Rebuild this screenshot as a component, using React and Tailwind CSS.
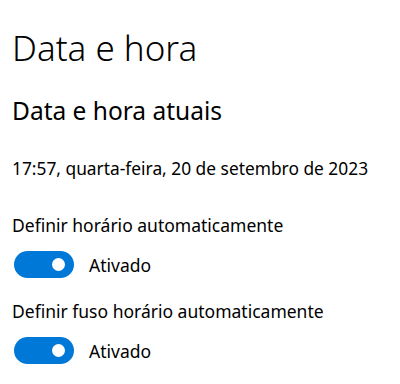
export default function App() {
  const font = { fontFamily: '"Noto Sans", "Open Sans", sans-serif' };

  const Toggle = () => (
    <div className="relative w-[60px] h-[27px] rounded-full bg-[#0078d7]">
      <div className="absolute right-[9px] top-[7px] w-[13px] h-[13px] rounded-full bg-white" />
    </div>
  );

  return (
    <div
      className="w-[400px] h-[384px] bg-white text-black px-3 pt-[26px] overflow-hidden"
      style={font}
    >
      <h1 className="text-[35px] font-light leading-[44px]">Data e hora</h1>
      <h2 className="mt-[26px] text-[24.5px] leading-[30px]">Data e hora atuais</h2>
      <p className="mt-[30px] text-[17.35px] leading-[24px]">
        17:57, quarta-feira, 20 de setembro de 2023
      </p>

      <div className="mt-[33px]">
        <p className="text-[17.5px] leading-[24px]">Definir horário automaticamente</p>
        <div className="mt-[14px] flex items-center gap-[15px] pl-[2px]">
          <Toggle />
          <span className="text-[17.5px] leading-[24px]">Ativado</span>
        </div>
      </div>

      <div className="mt-[21px]">
        <p className="text-[17.5px] leading-[24px]">Definir fuso horário automaticamente</p>
        <div className="mt-[14px] flex items-center gap-[15px] pl-[2px]">
          <Toggle />
          <span className="text-[17.5px] leading-[24px]">Ativado</span>
        </div>
      </div>
    </div>
  );
}
